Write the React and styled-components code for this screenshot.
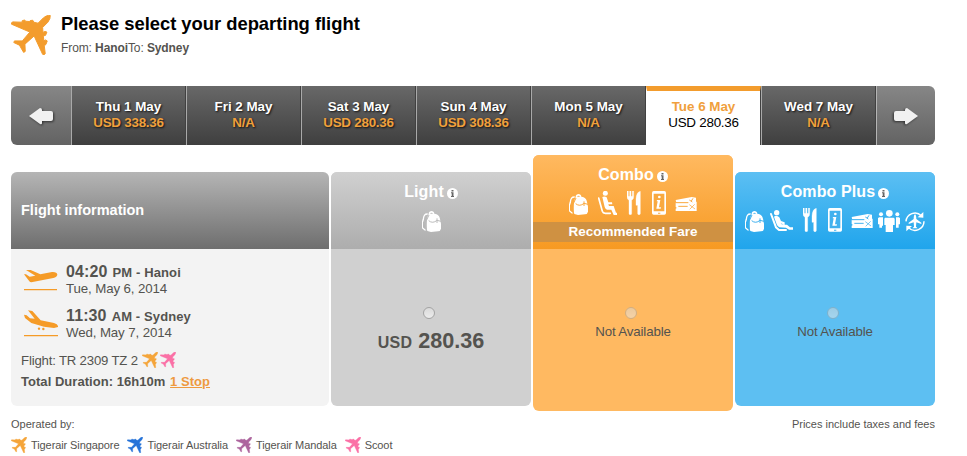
import React, { useState } from 'react';
import styled, { createGlobalStyle } from 'styled-components';

const GlobalStyle = createGlobalStyle`
  * {
    box-sizing: border-box;
  }

  body {
    margin: 0;
    background: #fff;
    color: #54534f;
    font-family: 'Liberation Sans', Arial, sans-serif;
    font-size: 13px;
  }

  svg {
    display: block;
    flex-shrink: 0;
  }
`;

const Page = styled.main`
  width: 924px;
  height: 456px;
  margin-left: 11px;
  padding-top: 15px;
  overflow: hidden;
`;

const Header = styled.header`
  display: flex;
  gap: 10px;
  height: 71px;
`;

const Title = styled.h1`
  margin: -2px 0 0;
  color: #000;
  font-size: 18.4px;
  line-height: 22px;
  letter-spacing: -0.02px;
`;

const Route = styled.p`
  margin: 5px 0 0;
  font-size: 12px;
  line-height: 16px;
  letter-spacing: -0.1px;
`;

const DateBar = styled.nav`
  display: flex;
  height: 59px;
  border-radius: 6px;
  overflow: hidden;
`;

const ArrowButton = styled.button`
  display: flex;
  align-items: center;
  justify-content: center;
  width: ${(props) => props.$width}px;
  padding: 0;
  border: none;
  border-left: ${(props) => (props.$divider ? '1px solid #b5b5b5' : 'none')};
  background: linear-gradient(#868686, #636363);
  cursor: pointer;

  svg {
    filter: drop-shadow(1px 1px 1px rgba(0, 0, 0, 0.55));
  }
`;

const DateTab = styled.button`
  display: flex;
  flex-direction: column;
  align-items: center;
  width: 115px;
  padding: ${(props) => (props.$active ? '8px 0 0' : '13px 0 0')};
  border: none;
  border-top: ${(props) => (props.$active ? '5px solid #f39c2d' : 'none')};
  border-left: 1px solid ${(props) => (props.$active ? '#fff' : '#a9a9a9')};
  border-right: 1px solid #414141;
  background: ${(props) => (props.$active ? '#fff' : 'linear-gradient(#686868, #3f3f3f)')};
  color: ${(props) => (props.$active ? '#f0a03c' : '#fff')};
  font: bold 13.4px/16px 'Liberation Sans', Arial, sans-serif;
  letter-spacing: -0.02px;
  text-shadow: ${(props) => (props.$active ? 'none' : '1px 1px 2px #111')};
  cursor: pointer;
`;

const DatePrice = styled.span`
  color: ${(props) => (props.$active ? '#000' : '#f0a03c')};
  font-weight: ${(props) => (props.$active ? 'normal' : 'bold')};
  letter-spacing: -0.25px;
`;

const FareTable = styled.section`
  display: flex;
  align-items: flex-start;
  gap: 2px;
  padding-top: 10px;
`;

const Column = styled.div`
  width: ${(props) => props.$width || 200}px;
  height: ${(props) => (props.$featured ? 256 : 234)}px;
  margin-top: ${(props) => (props.$featured ? 0 : 17)}px;
  border-radius: 6px;
  background: ${(props) => props.$background};
  overflow: hidden;
`;

const ColumnHead = styled.div`
  height: ${(props) => (props.$featured ? 94 : 77)}px;
  padding-top: 10px;
  background: ${(props) => props.$background};
  color: #fff;
`;

const InfoHead = styled(ColumnHead)`
  padding: 29px 10px 0;
  font-size: 14.5px;
  font-weight: bold;
  line-height: 18px;
`;

const FareName = styled.h2`
  display: flex;
  justify-content: center;
  gap: 3px;
  margin: 0;
  font-size: 16px;
  line-height: 20px;
  letter-spacing: 0.12px;

  svg {
    margin-top: 6px;
  }
`;

const IconRow = styled.div`
  display: flex;
  align-items: flex-end;
  justify-content: center;
  height: 24px;
  margin-top: 6px;
`;

const IconSlot = styled.span`
  margin-left: ${(props) => props.$gap}px;
  padding-bottom: ${(props) => props.$lift || 0}px;
`;

const Recommended = styled.div`
  height: 20px;
  margin-top: 7px;
  background: #cf9142;
  font-size: 13.5px;
  font-weight: bold;
  line-height: 20px;
  text-align: center;
`;

const FareBody = styled.label`
  display: flex;
  flex-direction: column;
  align-items: center;
  padding-top: 58px;
`;

const Radio = styled.input`
  appearance: none;
  width: 12px;
  height: 12px;
  margin: 0 4px 0 0;
  border: 1px solid #a3a3a3;
  border-radius: 50%;
  background: linear-gradient(#dadada, #ececec);
  opacity: ${(props) => (props.disabled ? 0.5 : 1)};
`;

const Price = styled.strong`
  display: flex;
  align-items: baseline;
  gap: 6px;
  margin-top: 10px;
  font-size: 21.6px;
  line-height: 24px;
`;

const Currency = styled.span`
  font-size: 16px;
  letter-spacing: 0.3px;
`;

const Unavailable = styled.span`
  margin-top: 5px;
  font-size: 13.3px;
  line-height: 16px;
  letter-spacing: -0.15px;
`;

const InfoBody = styled.div`
  padding: 14px 10px 0;
`;

const Leg = styled.div`
  display: flex;
  height: 44px;
  padding-left: 3px;
  gap: 8px;

  svg {
    margin-top: ${(props) => props.$iconTop}px;
  }
`;

const LegTime = styled.div`
  font-weight: bold;
  line-height: 18px;
  letter-spacing: 0.12px;
`;

const Hour = styled.span`
  margin-right: 5px;
  font-size: 16px;
`;

const LegDate = styled.div`
  font-size: 13.3px;
  line-height: 14px;
  letter-spacing: -0.12px;
`;

const FlightNumber = styled.div`
  display: flex;
  align-items: center;
  gap: 2px;
  height: 18px;
  font-size: 13.2px;
  letter-spacing: -0.18px;

  svg:first-of-type {
    margin-left: 2px;
  }
`;

const Duration = styled.div`
  margin-top: 5px;
  font-weight: bold;
  line-height: 16px;
  letter-spacing: 0.04px;
`;

const StopLink = styled.a`
  margin-left: 1px;
  color: #ee9a3f;
  text-decoration: underline;
`;

const Footer = styled.footer`
  padding-top: 6px;
  font-size: 11px;
`;

const FooterLine = styled.div`
  display: flex;
  justify-content: space-between;
  line-height: 15px;
`;

const Legend = styled.div`
  display: flex;
  gap: 8px;
  margin-top: 5px;
  letter-spacing: -0.09px;
`;

const LegendItem = styled.span`
  display: flex;
  align-items: center;
  gap: 4px;
  height: 16px;
  white-space: nowrap;
`;

const Plane = ({ size = 16, color }) => (
  <svg width={size} height={size} viewBox="0 0 121 122" fill={color}>
    <path d="M119 1C112 0 104 4 98 9L82 25L69 22L66 16L58 17L57 20L44 19L41 15L33 18L34 22L4 21Q0 24 1 28L57 52L34 79L10 79L8 84L25 92L28 97L38 114L43 111L42 89L70 64L96 120Q101 123 104 118L101 94L106 90L110 79L105 76L100 79L98 64L105 62L109 52L103 50L97 53L96 38L112 22Q121 10 119 1Z" stroke={color} strokeWidth="3" />
  </svg>
);

const Arrow = ({ flip }) => (
  <svg width="24" height="18" viewBox="0 0 24 18" fill="#f1f1f1" transform={flip ? 'scale(-1 1)' : undefined}>
    <path d="M0 9L11 1Q13 1 13 3V4H22Q24 4 24 6V12Q24 14 22 14H13V16Q13 18 11 17Z" />
  </svg>
);

const InfoDot = () => (
  <svg width="11" height="11" viewBox="0 0 11 11">
    <circle cx="5.5" cy="5.5" r="5.5" fill="#fff" />
    <path d="M4.5 2h2v1.4h-2zM4 4.3h2.5v3.6H7V9H4V7.9h.7V5.3H4z" fill="#666" />
  </svg>
);

const Departure = () => (
  <svg width="34" height="22" viewBox="0 0 102 66" fill="#f59b27">
    <path d="M6 3L20 3L49 16L84 9Q99 8 100 17Q99 24 88 27L22 40Q18 40 16 37L0 16L6 16L17 23L34 20Z" />
    <path d="M0 60h99v4H0z" />
  </svg>
);

const Arrival = () => (
  <svg width="34" height="27" viewBox="0 0 102 81" fill="#f59b27">
    <path d="M12 1L25 3L50 31L90 39Q104 44 102 51L90 54L60 50L22 39L3 24L0 14L8 16L18 25L32 26Z" />
    <circle cx="45" cy="56" r="3.6" />
    <circle cx="58" cy="57" r="3.6" />
    <path d="M0 75h102v4H0z" />
  </svg>
);

const Backpack = ({ color }) => (
  <svg width="19" height="21" viewBox="0 0 57 63">
    <path d="M20 9C19-2 37-3 37 8C50 9 54 18 55 29L57 38V53Q55 61 48 61L27 63L16 60C12 48 13 24 20 9ZM24 8H33Q29 2 24 8Z" fill="#fff" fillRule="evenodd" />
    <path d="M17 9Q5 8 4 25L1 34V50L8 56L12 58" fill="none" stroke="#fff" strokeWidth="4" />
    <path d="M20 29Q32 39 45 28L57 31M45 22V36M21 12L12 31V60" fill="none" stroke={color} strokeWidth="3" />
  </svg>
);

const Seat = () => (
  <svg width="19" height="24" viewBox="0 0 57 72">
    <circle cx="22" cy="7" r="7.5" fill="#fff" />
    <path d="M2 21L13 61Q15 67 22 67H37" fill="none" stroke="#fff" strokeWidth="5" strokeLinecap="round" />
    <path d="M13 18Q20 14 26 19L31 34H42L43 40H31L33 45H47L54 65H57V72H47L40 56H27Q22 55 20 48Z" fill="#fff" />
  </svg>
);

const Recliner = () => (
  <svg width="23" height="22" viewBox="0 0 69 66">
    <circle cx="20" cy="8" r="8" fill="#fff" />
    <path d="M3 12L18 52L27 60H48" fill="none" stroke="#fff" strokeWidth="6" strokeLinecap="round" />
    <path d="M12 20Q20 14 28 22L33 33L44 37V44L32 40L35 43L51 44L60 52H69V59H57L48 53L28 52Q23 51 20 43Z" fill="#fff" />
  </svg>
);

const Cutlery = () => (
  <svg width="14" height="24" viewBox="0 0 42 72" fill="#fff">
    <path d="M0 0H4V16H8V0H12V16H16V0H20V18Q20 25 14 28V68Q14 71 10 71Q6 71 6 68V28Q0 25 0 18ZM40 1V68Q40 71 36 71Q32 71 32 68V43H27V24Q28 3 40 1Z" stroke="#fff" strokeWidth="1" />
  </svg>
);

const Phone = ({ color }) => (
  <svg width="14" height="24" viewBox="0 0 42 72">
    <rect width="42" height="71" rx="5" fill="#fff" />
    <path d="M5 8H37V61H5Z" fill={color} />
    <circle cx="22" cy="18" r="4" fill="#fff" />
    <path d="M15 27H25L21 49H27L26 53H13L17 31H14Z" fill="#fff" />
    <path d="M18 65H25V68H18Z" fill={color} />
  </svg>
);

const Tickets = ({ color }) => (
  <svg width="22" height="15" viewBox="0 0 66 45">
    <path d="M2 9L50 0L63 2V16L4 17Z" fill="#fff" />
    <path d="M2 17L65 14V42H2V35Q8 33 2 30Z" fill="#fff" />
    <path d="M2 17H40M10 28H38M43 9L52 15M54 4L49 12" fill="none" stroke={color} strokeWidth="3" />
    <path d="M43 23L60 36M59 22L44 37" fill="none" stroke={color} strokeWidth="2.2" />
  </svg>
);

const People = () => (
  <svg width="22" height="22" viewBox="0 0 66 66" fill="#fff">
    <circle cx="34" cy="10" r="10" />
    <circle cx="9" cy="13" r="6" />
    <circle cx="58" cy="13" r="6" />
    <path d="M21 23H47L50 26V45H45V66H23V45H19V26ZM3 22H15V47H12V53H4V43H0V25ZM54 22H63L66 25V43H62V53H54Z" />
  </svg>
);

const FlexFlight = () => (
  <svg width="20" height="21" viewBox="0 0 60 63" fill="#fff">
    <path d="M3 31A27 27 0 0 1 49 14M57 31A27 27 0 0 1 11 50" fill="none" stroke="#fff" strokeWidth="4.5" />
    <path d="M55 3V20L38 19ZM4 61V44L21 45Z" />
    <path d="M30 10Q34 12 34 24L49 35V39L34 34L33 47L38 52H22L27 47L26 34L11 39V35L26 24Q26 12 30 10Z" />
  </svg>
);

const dates = [
  { day: 'Thu 1 May', price: 'USD 338.36' },
  { day: 'Fri 2 May', price: 'N/A' },
  { day: 'Sat 3 May', price: 'USD 280.36' },
  { day: 'Sun 4 May', price: 'USD 308.36' },
  { day: 'Mon 5 May', price: 'N/A' },
  { day: 'Tue 6 May', price: 'USD 280.36' },
  { day: 'Wed 7 May', price: 'N/A' },
];

const fares = [
  {
    name: 'Light',
    price: '280.36',
    head: 'linear-gradient(#d0d0d0, #adadad)',
    body: '#d0d0d0',
    tint: '#bcbcbc',
    icons: [{ icon: Backpack }],
  },
  {
    name: 'Combo',
    featured: true,
    head: 'linear-gradient(#ffb960, #f79a22)',
    body: '#ffb961',
    tint: '#f9a940',
    icons: [
      { icon: Backpack },
      { icon: Seat, gap: 10 },
      { icon: Cutlery, gap: 10 },
      { icon: Phone, gap: 11 },
      { icon: Tickets, gap: 9, lift: 3 },
    ],
  },
  {
    name: 'Combo Plus',
    head: 'linear-gradient(#5cbff3, #20a5ec)',
    body: '#5dbff2',
    tint: '#41b1ee',
    icons: [
      { icon: Backpack },
      { icon: Recliner, gap: 6 },
      { icon: Cutlery, gap: 10 },
      { icon: Phone, gap: 11 },
      { icon: Tickets, gap: 9, lift: 3 },
      { icon: People, gap: 5 },
      { icon: FlexFlight, gap: 5 },
    ],
  },
];

const operators = [
  { name: 'Tigerair Singapore', color: '#f5a53a' },
  { name: 'Tigerair Australia', color: '#2673d9' },
  { name: 'Tigerair Mandala', color: '#ad659e' },
  { name: 'Scoot', color: '#fb70a6' },
];

function FareColumn({ fare }) {
  return (
    <Column $background={fare.body} $featured={fare.featured}>
      <ColumnHead $background={fare.head} $featured={fare.featured}>
        <FareName>
          {fare.name}
          <InfoDot />
        </FareName>
        <IconRow>
          {fare.icons.map(({ icon: Icon, gap = 0, lift }, i) => (
            <IconSlot key={i} $gap={gap} $lift={lift}>
              <Icon color={fare.tint} />
            </IconSlot>
          ))}
        </IconRow>
        {fare.featured && <Recommended>Recommended Fare</Recommended>}
      </ColumnHead>
      <FareBody>
        <Radio type="radio" name="fare" disabled={!fare.price} />
        {fare.price ? (
          <Price>
            <Currency>USD</Currency>
            {fare.price}
          </Price>
        ) : (
          <Unavailable>Not Available</Unavailable>
        )}
      </FareBody>
    </Column>
  );
}

function App() {
  const [selected, setSelected] = useState(5);

  return (
    <Page>
      <GlobalStyle />
      <Header>
        <Plane size={40} color="#f39c2d" />
        <div>
          <Title>Please select your departing flight</Title>
          <Route>
            From: <b>Hanoi</b>To: <b>Sydney</b>
          </Route>
        </div>
      </Header>

      <DateBar>
        <ArrowButton $width={60} aria-label="Previous">
          <Arrow />
        </ArrowButton>
        {dates.map((date, i) => (
          <DateTab key={date.day} $active={i === selected} onClick={() => setSelected(i)}>
            {date.day}
            <DatePrice $active={i === selected}>{date.price}</DatePrice>
          </DateTab>
        ))}
        <ArrowButton $width={59} $divider aria-label="Next">
          <Arrow flip />
        </ArrowButton>
      </DateBar>

      <FareTable>
        <Column $width={318} $background="#f3f3f3">
          <InfoHead $background="linear-gradient(#b5b5b5, #6e6e6e)">Flight information</InfoHead>
          <InfoBody>
            <Leg $iconTop={6}>
              <Departure />
              <div>
                <LegTime>
                  <Hour>04:20</Hour>PM - Hanoi
                </LegTime>
                <LegDate>Tue, May 6, 2014</LegDate>
              </div>
            </Leg>
            <Leg $iconTop={3}>
              <Arrival />
              <div>
                <LegTime>
                  <Hour>11:30</Hour>AM - Sydney
                </LegTime>
                <LegDate>Wed, May 7, 2014</LegDate>
              </div>
            </Leg>
            <FlightNumber>
              Flight: TR 2309 TZ 2
              <Plane color="#f5a53a" />
              <Plane color="#fb70a6" />
            </FlightNumber>
            <Duration>
              Total Duration: 16h10m <StopLink>1 Stop</StopLink>
            </Duration>
          </InfoBody>
        </Column>
        {fares.map((fare) => (
          <FareColumn key={fare.name} fare={fare} />
        ))}
      </FareTable>

      <Footer>
        <FooterLine>
          <span>Operated by:</span>
          <span>Prices include taxes and fees</span>
        </FooterLine>
        <Legend>
          {operators.map((op) => (
            <LegendItem key={op.name}>
              <Plane color={op.color} />
              {op.name}
            </LegendItem>
          ))}
        </Legend>
      </Footer>
    </Page>
  );
}

export default App;
